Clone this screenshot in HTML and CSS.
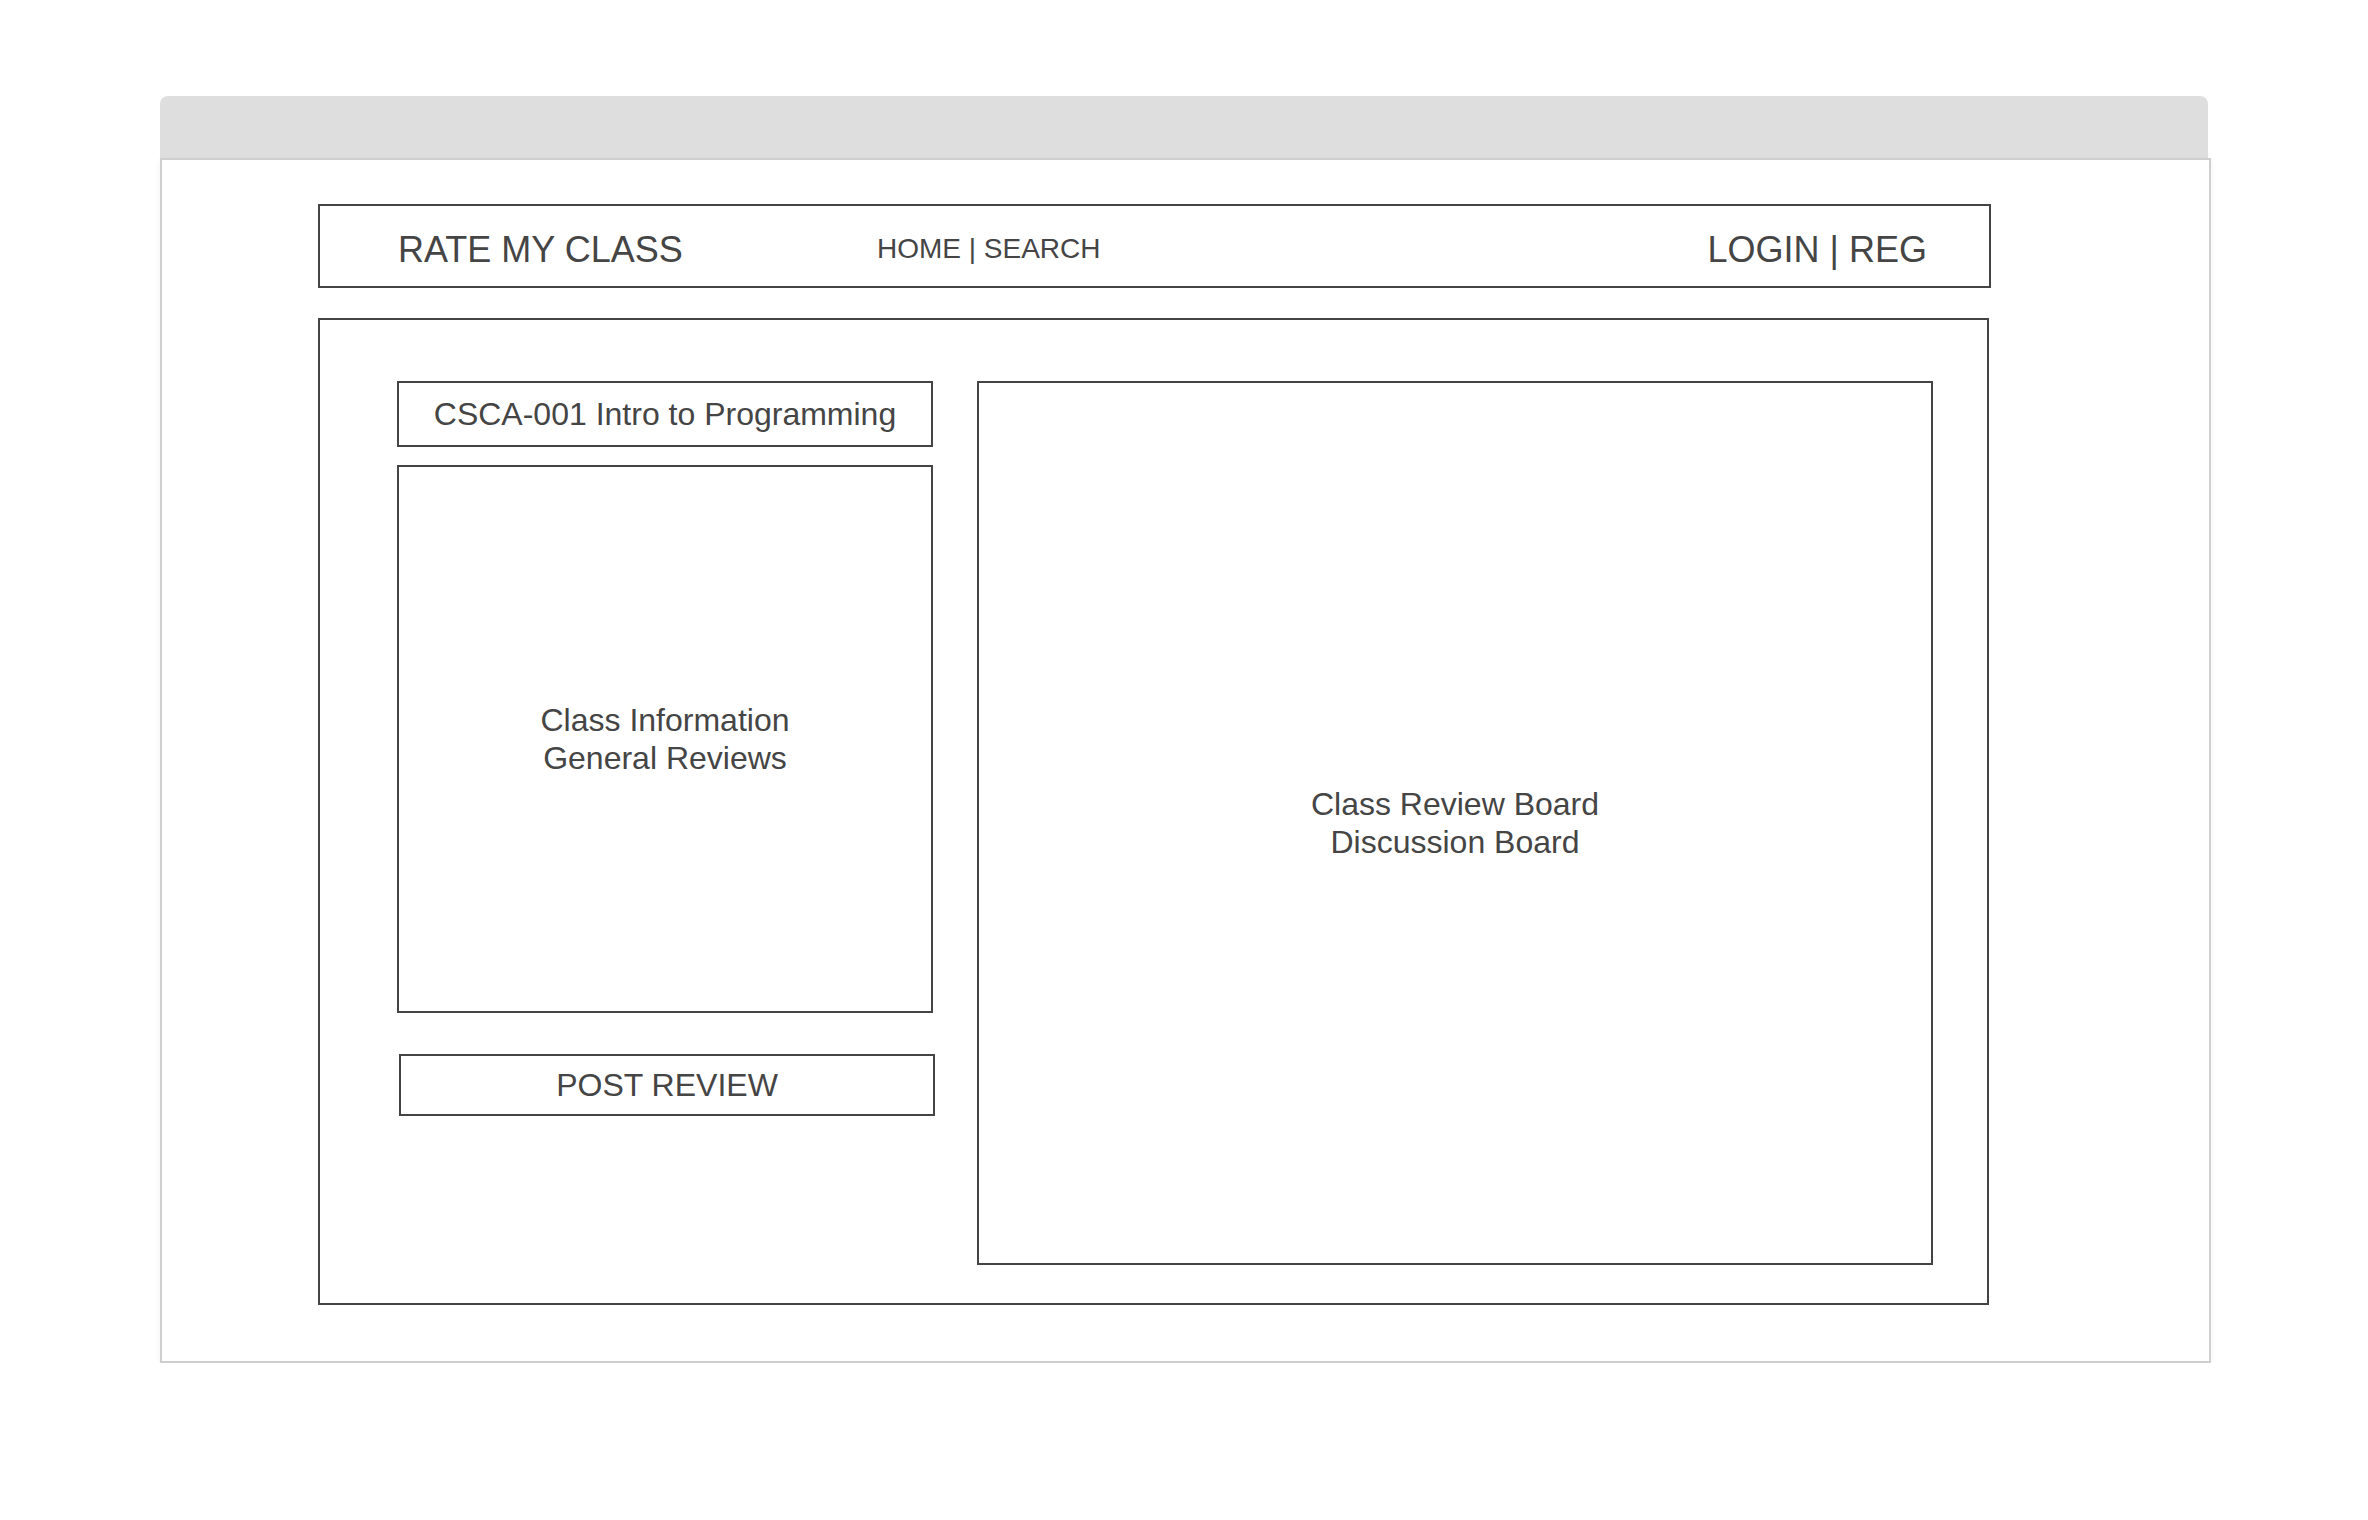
FILE: index.html
```html
<!DOCTYPE html>
<html lang="en">
<head>
  <meta charset="UTF-8" />
  <title>Rate My Class - Wireframe</title>
  <link rel="stylesheet" href="styles.css">
</head>
<body>
  <div class="window">
    <div class="titlebar"></div>
    <div class="window-body">

      <!-- top navigation -->
      <div class="header">
        <div class="brand">RATE MY CLASS</div>
        <div class="nav">HOME | SEARCH</div>
        <div class="account">LOGIN | REG</div>
      </div>

      <!-- class page -->
      <div class="main">
        <div class="left-col">
          <div class="class-title">CSCA-001 Intro to Programming</div>
          <div class="class-info">Class Information<br>General Reviews</div>
          <div class="post-review">POST REVIEW</div>
        </div>
        <div class="board">Class Review Board<br>Discussion Board</div>
      </div>

    </div>
  </div>
</body>
</html>
```

FILE: styles.css
```css
body {
  margin: 0;
  padding: 96px 0 0 160px;
  background: #fff;
  font-family: "Liberation Sans", Arial, sans-serif;
  color: #454545;
}

.window {
  width: 2051px;
}

.titlebar {
  width: 2048px;
  height: 62px;
  background: #dedede;
  border-radius: 8px 8px 0 0;
}

.window-body {
  border: 2px solid #cfcfcf;
  padding: 44px 0 56px 156px;
  box-shadow: 0 2px 6px rgba(0,0,0,0.06);
}

.header {
  box-sizing: border-box;
  width: 1673px;
  height: 84px;
  border: 2px solid #444;
  display: flex;
  align-items: center;
  padding: 8px 62px 0 78px;
}

.brand {
  width: 479px;
  font-size: 36px;
}

.nav {
  font-size: 28px;
  margin-top: -3px;
}

.account {
  margin-left: auto;
  font-size: 36px;
}

.main {
  box-sizing: border-box;
  width: 1671px;
  margin-top: 30px;
  border: 2px solid #444;
  padding: 61px 54px 38px 77px;
  display: flex;
  align-items: flex-start;
}

.left-col {
  width: 536px;
}

.class-title,
.class-info,
.post-review,
.board {
  box-sizing: border-box;
  border: 2px solid #444;
  display: flex;
  align-items: center;
  justify-content: center;
  text-align: center;
  font-size: 32px;
}

.class-title {
  height: 66px;
}

.class-info {
  height: 548px;
  margin-top: 18px;
  line-height: 38px;
}

.post-review {
  width: 536px;
  height: 62px;
  margin: 41px 0 0 2px;
}

.board {
  width: 956px;
  height: 884px;
  margin-left: 44px;
  line-height: 38px;
}
```
